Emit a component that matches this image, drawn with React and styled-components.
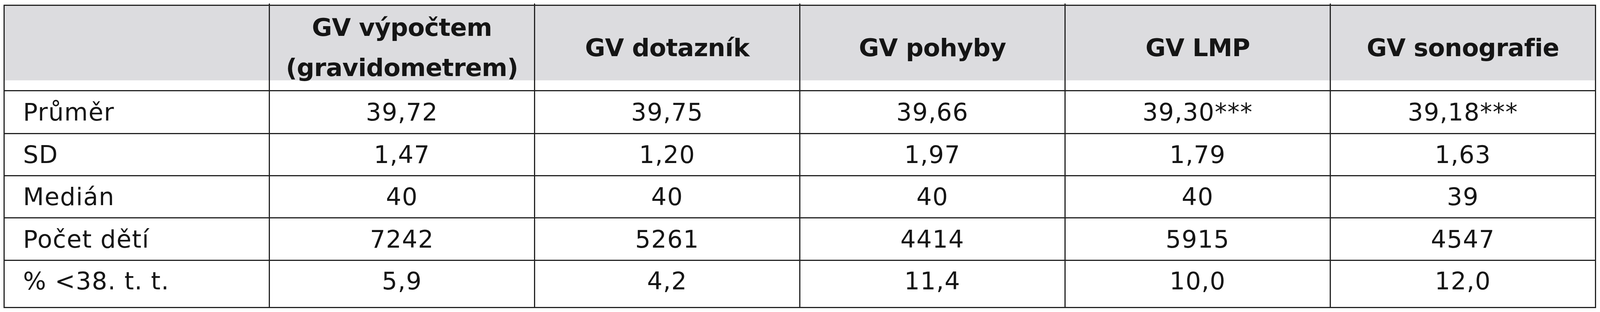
import React from "react";
import styled, { createGlobalStyle } from "styled-components";

const GlobalStyle = createGlobalStyle`
  html, body {
    margin: 0;
    padding: 0;
    background: #ffffff;
    overflow: hidden;
  }
`;

const Page = styled.div`
  padding: 12px 0 0 9px;
  height: 800px;
  box-sizing: border-box;
  background: #ffffff;
`;

const Grid = styled.div`
  display: grid;
  grid-template-columns: repeat(6, 676px);
  grid-template-rows: 216px 107px 105px 105px 106px 118px;
  gap: 3px;
  width: max-content;
  border: 3px solid #222222;
  background: #222222;
  font-family: "DejaVu Sans", "Liberation Sans", sans-serif;
  color: #151515;
`;

const HeadCell = styled.div`
  position: relative;
  display: flex;
  align-items: center;
  justify-content: center;
  padding-bottom: 2px;
  background: linear-gradient(#dcdcdf 0 191px, #ffffff 191px);
  font-size: 63px;
  font-weight: bold;
  line-height: 103px;
  letter-spacing: -0.7px;
  text-align: center;

  &:not(:first-child)::before {
    content: "";
    position: absolute;
    left: -3px;
    top: -6px;
    width: 3px;
    height: 4px;
    background: #222222;
  }
`;

const Cell = styled.div`
  display: flex;
  align-items: center;
  justify-content: ${(props) => (props.label ? "flex-start" : "center")};
  padding: 0 0 ${(props) => props.pb || 0}px ${(props) => (props.label ? 47 : 0)}px;
  background: #ffffff;
  font-size: 62px;
  letter-spacing: 1.5px;
  white-space: nowrap;
`;

const columns = [
  ["GV výpočtem", "(gravidometrem)"],
  ["GV dotazník"],
  ["GV pohyby"],
  ["GV LMP"],
  ["GV sonografie"],
];

const rows = [
  { label: "Průměr", values: ["39,72", "39,75", "39,66", "39,30***", "39,18***"] },
  { label: "SD", values: ["1,47", "1,20", "1,97", "1,79", "1,63"] },
  { label: "Medián", values: ["40", "40", "40", "40", "39"] },
  { label: "Počet dětí", values: ["7242", "5261", "4414", "5915", "4547"] },
  { label: "% <38. t. t.", values: ["5,9", "4,2", "11,4", "10,0", "12,0"], pb: 16 },
];

export default function App() {
  return (
    <>
      <GlobalStyle />
      <Page>
        <Grid>
          <HeadCell />
          {columns.map((lines) => (
            <HeadCell key={lines[0]}>
              <div>
                {lines.map((line, i) => (
                  <React.Fragment key={line}>
                    {i > 0 && <br />}
                    {line}
                  </React.Fragment>
                ))}
              </div>
            </HeadCell>
          ))}
          {rows.map((row) => (
            <React.Fragment key={row.label}>
              <Cell label pb={row.pb}>
                {row.label}
              </Cell>
              {row.values.map((v, i) => (
                <Cell key={i} pb={row.pb}>
                  {v}
                </Cell>
              ))}
            </React.Fragment>
          ))}
        </Grid>
      </Page>
    </>
  );
}
